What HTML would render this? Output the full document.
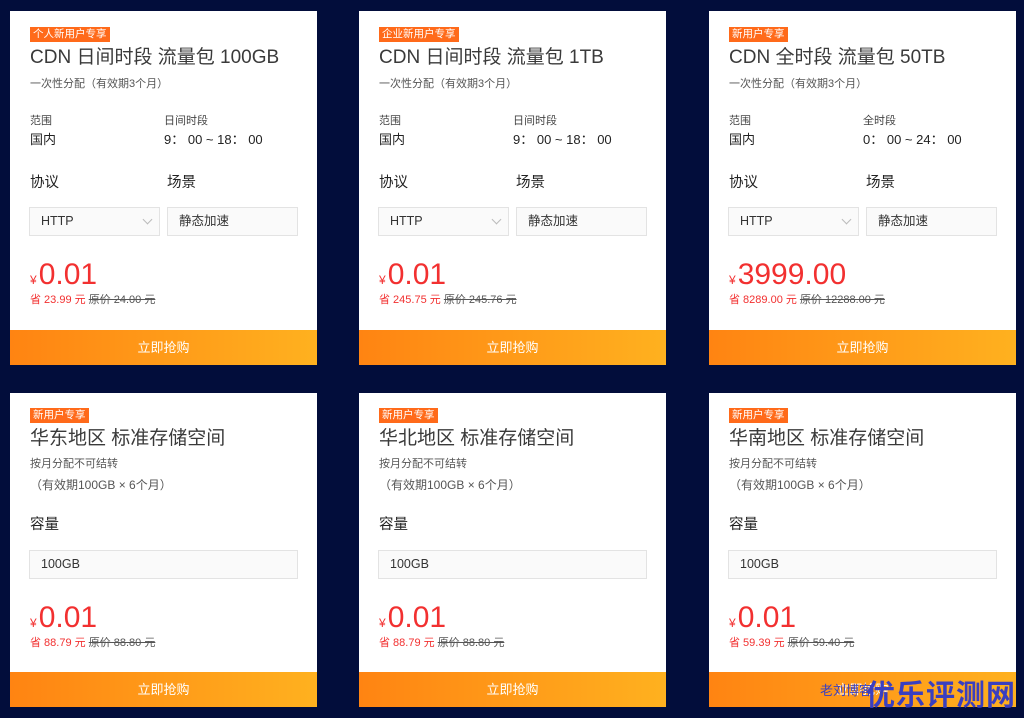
<!DOCTYPE html>
<html><head><meta charset="utf-8"><style>
*{margin:0;padding:0;box-sizing:border-box}
body{width:1024px;height:718px;background:#020d3b;font-family:"Liberation Sans","Noto Sans CJK SC",sans-serif;position:relative;overflow:hidden}
.card{position:absolute;width:307px;background:#fff}
.card>*{position:absolute;white-space:nowrap}
.tag{left:20px;background:#ff6a1a;color:#fff;font-size:10.5px;line-height:15px;padding:0 3px}
.title{left:20px;font-size:19px;color:#3a3a3a;line-height:24px}
.sub{left:20px;font-size:11px;color:#555;line-height:14px}
.lbl{font-size:11px;color:#444;line-height:14px}
.val{font-size:13px;color:#222;line-height:16px}
.h{font-size:14.5px;color:#222;line-height:18px}
.box{background:#fafafa;border:1px solid #e3e3e3;height:29px;font-size:12.5px;color:#333;line-height:27px;padding-left:11px}
.price{left:20px;color:#f23030;font-size:30px;line-height:32px}
.price small{font-size:12px;margin-right:2px}
.save{left:20px;font-size:11px;color:#f23030;line-height:14px}
.save s{color:#555}
.btn{left:0;bottom:0;width:307px;height:35px;background:linear-gradient(90deg,#ff8412,#ffb11f);color:#fff;font-size:13px;text-align:center;line-height:35px}
.chev{position:absolute;right:8px;top:8px;width:7px;height:7px;border-right:1px solid #bbb;border-bottom:1px solid #bbb;transform:rotate(45deg)}
.wm{position:absolute;left:866px;top:672px;font-size:29px;font-weight:bold;color:#3a3fc0;letter-spacing:1px;font-family:"Noto Sans CJK SC",sans-serif}
.wm2{position:absolute;left:820px;top:680px;font-size:13px;color:#3a3fc0;font-family:"Noto Sans CJK SC",sans-serif}
</style></head><body>

<div class="card" style="left:10px;top:11px;height:354px">
<div class="tag" style="top:16px">个人新用户专享</div>
<div class="title" style="top:35px">CDN 日间时段 流量包 100GB</div>
<div class="sub" style="top:66px">一次性分配（有效期3个月）</div>
<div class="lbl" style="left:20px;top:103px">范围</div><div class="val" style="left:20px;top:121px">国内</div>
<div class="lbl" style="left:154px;top:103px">日间时段</div><div class="val" style="left:154px;top:121px">9： 00 ~ 18： 00</div>
<div class="h" style="left:20px;top:163px">协议</div><div class="h" style="left:157px;top:163px">场景</div>
<div class="box" style="left:19px;top:196px;width:131px">HTTP<span class="chev"></span></div>
<div class="box" style="left:157px;top:196px;width:131px">静态加速</div>
<div class="price" style="top:248px"><small>¥</small>0.01</div>
<div class="save" style="top:282px">省 23.99 元 <s>原价 24.00 元</s></div>
<div class="btn">立即抢购</div></div>

<div class="card" style="left:359px;top:11px;height:354px">
<div class="tag" style="top:16px">企业新用户专享</div>
<div class="title" style="top:35px">CDN 日间时段 流量包 1TB</div>
<div class="sub" style="top:66px">一次性分配（有效期3个月）</div>
<div class="lbl" style="left:20px;top:103px">范围</div><div class="val" style="left:20px;top:121px">国内</div>
<div class="lbl" style="left:154px;top:103px">日间时段</div><div class="val" style="left:154px;top:121px">9： 00 ~ 18： 00</div>
<div class="h" style="left:20px;top:163px">协议</div><div class="h" style="left:157px;top:163px">场景</div>
<div class="box" style="left:19px;top:196px;width:131px">HTTP<span class="chev"></span></div>
<div class="box" style="left:157px;top:196px;width:131px">静态加速</div>
<div class="price" style="top:248px"><small>¥</small>0.01</div>
<div class="save" style="top:282px">省 245.75 元 <s>原价 245.76 元</s></div>
<div class="btn">立即抢购</div></div>

<div class="card" style="left:709px;top:11px;height:354px">
<div class="tag" style="top:16px">新用户专享</div>
<div class="title" style="top:35px">CDN 全时段 流量包 50TB</div>
<div class="sub" style="top:66px">一次性分配（有效期3个月）</div>
<div class="lbl" style="left:20px;top:103px">范围</div><div class="val" style="left:20px;top:121px">国内</div>
<div class="lbl" style="left:154px;top:103px">全时段</div><div class="val" style="left:154px;top:121px">0： 00 ~ 24： 00</div>
<div class="h" style="left:20px;top:163px">协议</div><div class="h" style="left:157px;top:163px">场景</div>
<div class="box" style="left:19px;top:196px;width:131px">HTTP<span class="chev"></span></div>
<div class="box" style="left:157px;top:196px;width:131px">静态加速</div>
<div class="price" style="top:248px"><small>¥</small>3999.00</div>
<div class="save" style="top:282px">省 8289.00 元 <s>原价 12288.00 元</s></div>
<div class="btn">立即抢购</div></div>

<div class="card" style="left:10px;top:393px;height:314px">
<div class="tag" style="top:15px">新用户专享</div>
<div class="title" style="top:34px">华东地区 标准存储空间</div>
<div class="sub" style="top:64px">按月分配不可结转</div>
<div class="sub" style="top:85px;font-size:12px">（有效期100GB × 6个月）</div>
<div class="h" style="left:20px;top:123px">容量</div>
<div class="box" style="left:19px;top:157px;width:269px">100GB</div>
<div class="price" style="top:209px"><small>¥</small>0.01</div>
<div class="save" style="top:243px">省 88.79 元 <s>原价 88.80 元</s></div>
<div class="btn">立即抢购</div></div>

<div class="card" style="left:359px;top:393px;height:314px">
<div class="tag" style="top:15px">新用户专享</div>
<div class="title" style="top:34px">华北地区 标准存储空间</div>
<div class="sub" style="top:64px">按月分配不可结转</div>
<div class="sub" style="top:85px;font-size:12px">（有效期100GB × 6个月）</div>
<div class="h" style="left:20px;top:123px">容量</div>
<div class="box" style="left:19px;top:157px;width:269px">100GB</div>
<div class="price" style="top:209px"><small>¥</small>0.01</div>
<div class="save" style="top:243px">省 88.79 元 <s>原价 88.80 元</s></div>
<div class="btn">立即抢购</div></div>

<div class="card" style="left:709px;top:393px;height:314px">
<div class="tag" style="top:15px">新用户专享</div>
<div class="title" style="top:34px">华南地区 标准存储空间</div>
<div class="sub" style="top:64px">按月分配不可结转</div>
<div class="sub" style="top:85px;font-size:12px">（有效期100GB × 6个月）</div>
<div class="h" style="left:20px;top:123px">容量</div>
<div class="box" style="left:19px;top:157px;width:269px">100GB</div>
<div class="price" style="top:209px"><small>¥</small>0.01</div>
<div class="save" style="top:243px">省 59.39 元 <s>原价 59.40 元</s></div>
<div class="btn">立即抢购</div></div>

<div class="wm2">老刘博客</div>
<div class="wm">优乐评测网</div>
</body></html>
